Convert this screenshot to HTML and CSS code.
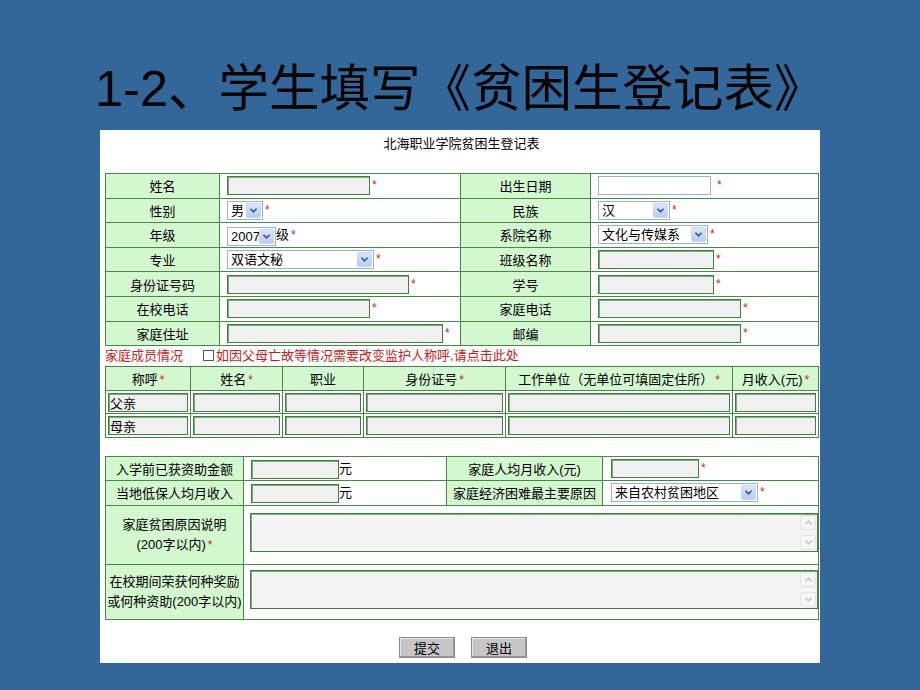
FILE: index.html
```html
<!DOCTYPE html>
<html lang="zh-CN">
<head>
<meta charset="utf-8">
<title>学生填写贫困生登记表</title>
<link rel="stylesheet" href="styles.css">
</head>
<body>
<div class="slide">
  <h1 class="title"><span class="num">1-2</span>、学生填写《贫困生登记表》</h1>
  <div class="panel">
    <div class="form-head">北海职业学院贫困生登记表</div>

    <table class="grid main">
      <colgroup><col class="m1"><col class="m2"><col class="m3"><col class="m4"></colgroup>
      <tr>
        <td class="lab">姓名</td>
        <td class="val"><input class="inp w143" type="text"><i class="req">*</i></td>
        <td class="lab">出生日期</td>
        <td class="val"><input class="inp plain w113" type="text"><i class="req far">*</i></td>
      </tr>
      <tr>
        <td class="lab">性别</td>
        <td class="val"><span class="sel w36"><span class="sel-text">男</span><span class="sel-btn"><svg viewBox="0 0 10 8" width="9" height="7"><path d="M1.5 2 L5 5.5 L8.5 2" fill="none" stroke="#3b5a8c" stroke-width="2"/></svg></span></span><i class="req">*</i></td>
        <td class="lab">民族</td>
        <td class="val"><span class="sel w72"><span class="sel-text">汉</span><span class="sel-btn"><svg viewBox="0 0 10 8" width="9" height="7"><path d="M1.5 2 L5 5.5 L8.5 2" fill="none" stroke="#3b5a8c" stroke-width="2"/></svg></span></span><i class="req">*</i></td>
      </tr>
      <tr>
        <td class="lab">年级</td>
        <td class="val"><span class="sel w49"><span class="sel-text">2007</span><span class="sel-btn"><svg viewBox="0 0 10 8" width="9" height="7"><path d="M1.5 2 L5 5.5 L8.5 2" fill="none" stroke="#3b5a8c" stroke-width="2"/></svg></span></span>级<i class="req">*</i></td>
        <td class="lab">系院名称</td>
        <td class="val"><span class="sel w110"><span class="sel-text">文化与传媒系</span><span class="sel-btn"><svg viewBox="0 0 10 8" width="9" height="7"><path d="M1.5 2 L5 5.5 L8.5 2" fill="none" stroke="#3b5a8c" stroke-width="2"/></svg></span></span><i class="req">*</i></td>
      </tr>
      <tr>
        <td class="lab">专业</td>
        <td class="val"><span class="sel w147"><span class="sel-text">双语文秘</span><span class="sel-btn"><svg viewBox="0 0 10 8" width="9" height="7"><path d="M1.5 2 L5 5.5 L8.5 2" fill="none" stroke="#3b5a8c" stroke-width="2"/></svg></span></span><i class="req">*</i></td>
        <td class="lab">班级名称</td>
        <td class="val"><input class="inp w116" type="text"><i class="req">*</i></td>
      </tr>
      <tr>
        <td class="lab">身份证号码</td>
        <td class="val"><input class="inp w182" type="text"><i class="req">*</i></td>
        <td class="lab">学号</td>
        <td class="val"><input class="inp w116" type="text"><i class="req">*</i></td>
      </tr>
      <tr>
        <td class="lab">在校电话</td>
        <td class="val"><input class="inp w143" type="text"><i class="req">*</i></td>
        <td class="lab">家庭电话</td>
        <td class="val"><input class="inp w143" type="text"><i class="req">*</i></td>
      </tr>
      <tr>
        <td class="lab">家庭住址</td>
        <td class="val"><input class="inp w216" type="text"><i class="req">*</i></td>
        <td class="lab">邮编</td>
        <td class="val"><input class="inp w143" type="text"><i class="req">*</i></td>
      </tr>
    </table>

    <div class="family-note">家庭成员情况<span class="chk"></span>如因父母亡故等情况需要改变监护人称呼,请点击此处</div>

    <table class="grid family">
      <colgroup><col class="f1"><col class="f2"><col class="f3"><col class="f4"><col class="f5"><col class="f6"></colgroup>
      <tr class="head">
        <td>称呼<i class="req">*</i></td>
        <td>姓名<i class="req">*</i></td>
        <td>职业</td>
        <td>身份证号<i class="req">*</i></td>
        <td>工作单位（无单位可填固定住所）<i class="req">*</i></td>
        <td>月收入(元)<i class="req">*</i></td>
      </tr>
      <tr>
        <td><input class="inp full" type="text" value="父亲"></td>
        <td><input class="inp full" type="text"></td>
        <td><input class="inp full" type="text"></td>
        <td><input class="inp full" type="text"></td>
        <td><input class="inp full" type="text"></td>
        <td><input class="inp full" type="text"></td>
      </tr>
      <tr>
        <td><input class="inp full" type="text" value="母亲"></td>
        <td><input class="inp full" type="text"></td>
        <td><input class="inp full" type="text"></td>
        <td><input class="inp full" type="text"></td>
        <td><input class="inp full" type="text"></td>
        <td><input class="inp full" type="text"></td>
      </tr>
    </table>

    <table class="grid extra">
      <colgroup><col class="e1"><col class="e2"><col class="e3"><col class="e4"></colgroup>
      <tr class="r1">
        <td class="lab">入学前已获资助金额</td>
        <td class="val"><input class="inp w88" type="text">元</td>
        <td class="lab">家庭人均月收入(元)</td>
        <td class="val v2"><input class="inp w88" type="text"><i class="req">*</i></td>
      </tr>
      <tr class="r2">
        <td class="lab">当地低保人均月收入</td>
        <td class="val"><input class="inp w88" type="text">元</td>
        <td class="lab">家庭经济困难最主要原因</td>
        <td class="val v2"><span class="sel w147"><span class="sel-text">来自农村贫困地区</span><span class="sel-btn"><svg viewBox="0 0 10 8" width="9" height="7"><path d="M1.5 2 L5 5.5 L8.5 2" fill="none" stroke="#3b5a8c" stroke-width="2"/></svg></span></span><i class="req">*</i></td>
      </tr>
      <tr class="r3">
        <td class="lab two">家庭贫困原因说明<br>(200字以内)<i class="req">*</i></td>
        <td class="val ta-cell" colspan="3">
          <div class="ta">
            <div class="ta-body"></div>
            <div class="ta-bar">
              <span class="ta-btn"><svg viewBox="0 0 10 8" width="9" height="7"><path d="M1.5 6 L5 2.5 L8.5 6" fill="none" stroke="#c2c2c2" stroke-width="1.6"/></svg></span>
              <span class="ta-btn"><svg viewBox="0 0 10 8" width="9" height="7"><path d="M1.5 2 L5 5.5 L8.5 2" fill="none" stroke="#c2c2c2" stroke-width="1.6"/></svg></span>
            </div>
          </div>
        </td>
      </tr>
      <tr class="r4">
        <td class="lab two">在校期间荣获何种奖励<br>或何种资助(200字以内)</td>
        <td class="val ta-cell" colspan="3">
          <div class="ta">
            <div class="ta-body"></div>
            <div class="ta-bar">
              <span class="ta-btn"><svg viewBox="0 0 10 8" width="9" height="7"><path d="M1.5 6 L5 2.5 L8.5 6" fill="none" stroke="#c2c2c2" stroke-width="1.6"/></svg></span>
              <span class="ta-btn"><svg viewBox="0 0 10 8" width="9" height="7"><path d="M1.5 2 L5 5.5 L8.5 2" fill="none" stroke="#c2c2c2" stroke-width="1.6"/></svg></span>
            </div>
          </div>
        </td>
      </tr>
    </table>

    <div class="actions">
      <button class="btn" type="button">提交</button>
      <button class="btn" type="button">退出</button>
    </div>
  </div>
</div>
</body>
</html>
```

FILE: styles.css
```css
html, body {
  margin: 0;
  padding: 0;
}
body {
  background: #336699;
  font-family: "Liberation Sans", "Noto Sans CJK SC", sans-serif;
}
.slide {
  width: 920px;
  height: 690px;
  overflow: hidden;
}
.title {
  margin: 0;
  height: 130px;
  box-sizing: border-box;
  padding: 55px 0 0 95px;
  font-family: "Noto Sans CJK SC", sans-serif;
  font-size: 50.5px;
  line-height: 58px;
  font-weight: normal;
  color: #050505;
  white-space: nowrap;
}
.num {
  font-family: "Liberation Sans", sans-serif;
}
.panel {
  margin-left: 100px;
  width: 720px;
  height: 533px;
  box-sizing: border-box;
  padding: 0 2px 0 5px;
  background: #fff;
  font-size: 13px;
  color: #000;
}
.form-head {
  height: 43px;
  line-height: 28px;
  text-align: center;
  font-size: 13px;
}

/* tables */
.grid {
  width: 713px;
  border-collapse: collapse;
  table-layout: fixed;
  font-size: 13px;
}
.grid td {
  border: 1px solid #4a864a;
  padding: 0 0 0 7px;
  white-space: nowrap;
  vertical-align: middle;
}
.grid .lab {
  background: #d3f7cf;
  text-align: center;
  padding: 0;
}
.main td {
  height: 23.6px;
}
.m1 { width: 114px; }
.m2 { width: 241px; }
.m3 { width: 130px; }
.m4 { width: 228px; }

.req {
  font-style: normal;
  color: #c81e2a;
  font-size: 12px;
  margin-left: 2px;
}
.req.far {
  margin-left: 6px;
}

/* inputs */
.inp {
  box-sizing: border-box;
  height: 19px;
  margin: 0;
  padding: 0 0 0 1px;
  border: 1px solid #3f7f3f;
  box-shadow: inset 1px 1px 0 #7faa7f;
  background: #f0f0f0;
  font-family: "Liberation Sans", "Noto Sans CJK SC", sans-serif;
  font-size: 13px;
  color: #000;
  vertical-align: middle;
  outline: none;
}
.inp.plain {
  background: #fff;
  border-color: #9bb2c9;
  box-shadow: none;
}
.w88 { width: 88px; }
.w113 { width: 113px; }
.w116 { width: 116px; }
.w143 { width: 143px; }
.w182 { width: 182px; }
.w216 { width: 216px; }
.full { width: 100%; }

/* select lookalike */
.sel {
  display: inline-flex;
  align-items: center;
  box-sizing: border-box;
  height: 19px;
  border: 1px solid #9bb2c9;
  background: #fff;
  vertical-align: middle;
}
.w36 { width: 36px; }
.w49 { width: 49px; }
.w72 { width: 72px; }
.w110 { width: 110px; }
.w147 { width: 147px; }
.sel-text {
  flex: 1;
  padding-left: 3px;
  font-size: 13px;
  line-height: 17px;
  overflow: hidden;
}
.sel-btn {
  display: flex;
  align-items: center;
  justify-content: center;
  box-sizing: border-box;
  width: 15px;
  height: 15px;
  margin-right: 1px;
  border: 1px solid #c6d6f7;
  border-radius: 2px;
  background: linear-gradient(#dbe6fc, #b7cbf4);
}

/* family */
.family-note {
  height: 20px;
  line-height: 20px;
  color: #cc1b1b;
  font-size: 13px;
  white-space: nowrap;
}
.chk {
  display: inline-block;
  box-sizing: border-box;
  width: 11px;
  height: 11px;
  margin: 0 2px 0 20px;
  border: 1px solid #555;
  background: #fff;
  vertical-align: -1px;
}
.family {
  margin-bottom: 18px;
}
.family td {
  height: 22.6px;
  padding: 0 2px;
}
.family .head td {
  background: #d3f7cf;
  text-align: center;
}
.f1 { width: 85px; }
.f2 { width: 92px; }
.f3 { width: 81px; }
.f4 { width: 142px; }
.f5 { width: 227px; }
.f6 { width: 86px; }

/* extra */
.e1 { width: 138px; }
.e2 { width: 203px; }
.e3 { width: 156px; }
.e4 { width: 216px; }
.extra .r1 td { height: 23px; }
.extra .r2 td { height: 24px; }
.extra .r3 td { height: 58px; }
.extra .r4 td { height: 54px; }
.extra .v2 {
  padding-left: 8px;
}
.extra .two {
  line-height: 20px;
  white-space: normal;
  font-size: 13px;
}
.extra .r3 .ta-cell,
.extra .r4 .ta-cell {
  height: auto;
  padding: 7px 0 0 6px;
  vertical-align: top;
}
.extra .r4 .ta-cell {
  padding-top: 5px;
}
.ta {
  display: flex;
  box-sizing: border-box;
  width: 568px;
  height: 39px;
  border: 1px solid #3f7f3f;
  box-shadow: inset 1px 1px 0 #7faa7f;
  background: #f3f3f3;
}
.ta-body {
  flex: 1;
}
.ta-bar {
  display: flex;
  flex-direction: column;
  justify-content: space-between;
  width: 16px;
  padding: 1px 1px 1px 0;
}
.ta-btn {
  display: flex;
  align-items: center;
  justify-content: center;
  box-sizing: border-box;
  height: 15px;
  border: 1px solid #e4e4e4;
  border-radius: 2px;
  background: #f5f5f5;
}

/* actions */
.actions {
  display: flex;
  justify-content: center;
  gap: 16px;
  padding: 17px 0 0 3px;
}
.btn {
  box-sizing: border-box;
  width: 56px;
  height: 21px;
  padding: 0;
  border: 1px solid #8a8a8a;
  box-shadow: inset -1px -1px 0 #9a9a9a, inset 1px 1px 0 #e6e6e6;
  background: #c6c6c6;
  font-family: "Noto Sans CJK SC", sans-serif;
  font-size: 13px;
  line-height: 17px;
  color: #000;
}
```
